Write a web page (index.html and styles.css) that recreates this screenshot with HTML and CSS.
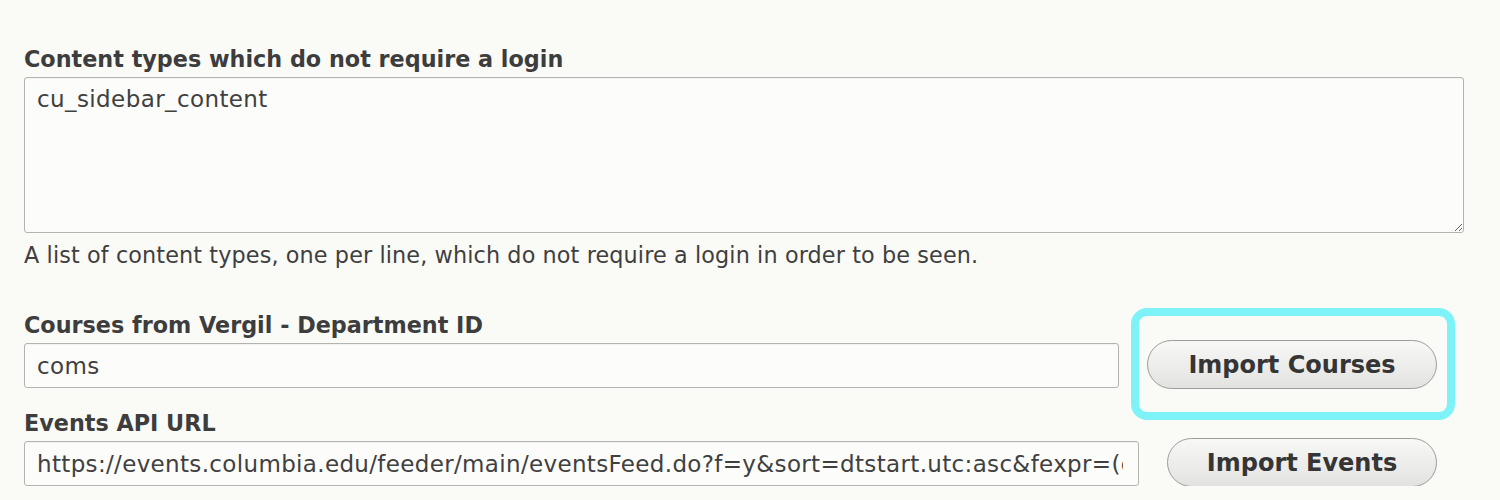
FILE: index.html
```html
<!DOCTYPE html>
<html lang="en">
<head>
<meta charset="utf-8">
<title>Settings</title>
<link rel="stylesheet" href="styles.css">
</head>
<body>
<form class="settings">
  <div class="field">
    <label class="field-label" for="ct">Content types which do not require a login</label>
    <textarea id="ct" class="textarea">cu_sidebar_content</textarea>
    <div class="description">A list of content types, one per line, which do not require a login in order to be seen.</div>
  </div>

  <div class="inline-row row-courses">
    <div class="inline-field">
      <label class="field-label" for="dept">Courses from Vergil - Department ID</label>
      <input id="dept" class="text-input" type="text" value="coms">
    </div>
    <div class="button-wrap">
      <button type="button" class="btn btn-courses">Import Courses</button>
      <span class="highlight"></span>
    </div>
  </div>

  <div class="inline-row row-events">
    <div class="inline-field">
      <label class="field-label" for="events">Events API URL</label>
      <input id="events" class="text-input url-input" type="text" value="https://events.columbia.edu/feeder/main/eventsFeed.do?f=y&amp;sort=dtstart.utc:asc&amp;fexpr=(categories.href=%22/public/.bedework/categories/org/ComputerScience%22)&amp;skinName=list-json&amp;count=20">
    </div>
    <div class="button-wrap">
      <button type="button" class="btn btn-events">Import Events</button>
    </div>
  </div>
</form>
</body>
</html>
```

FILE: styles.css
```css
html, body {
  margin: 0;
  padding: 0;
  background: #fafaf7;
}

body {
  font-family: "DejaVu Sans", "Liberation Sans", sans-serif;
  color: #3b3b3b;
}

.settings {
  padding: 46px 0 0 24px;
}

.field-label {
  display: block;
  font-weight: bold;
  font-size: 22.3px;
  line-height: 26px;
  color: #3d3d3d;
  margin-bottom: 5px;
  white-space: nowrap;
}

.textarea {
  display: block;
  box-sizing: border-box;
  width: 1440px;
  height: 156px;
  margin: 0;
  padding: 8px 12px;
  border: 1px solid #b3b3b1;
  border-radius: 3px;
  background: #fcfcfa;
  font-family: "DejaVu Sans", "Liberation Sans", sans-serif;
  font-size: 23px;
  line-height: 27px;
  letter-spacing: 0.4px;
  color: #404040;
  resize: vertical;
  outline: none;
  box-shadow: inset 0 1px 1px rgba(0,0,0,0.04);
}

.description {
  margin-top: 9px;
  font-size: 22.3px;
  line-height: 26px;
  letter-spacing: 0.12px;
  color: #3f3f3f;
}

.inline-row {
  display: flex;
  align-items: flex-end;
  gap: 28px;
  width: 1413px;
}

.row-courses {
  margin-top: 44px;
}

.row-events {
  margin-top: 22px;
}

.inline-field {
  flex: 1;
  min-width: 0;
}

.text-input {
  display: block;
  box-sizing: border-box;
  width: 100%;
  height: 45px;
  margin: 0;
  padding: 0 12px;
  border: 1px solid #b3b3b1;
  border-radius: 3px;
  background: #fcfcfa;
  font-family: "DejaVu Sans", "Liberation Sans", sans-serif;
  font-size: 23px;
  letter-spacing: 0.4px;
  color: #404040;
  outline: none;
  box-shadow: inset 0 1px 1px rgba(0,0,0,0.04);
}

.url-input {
  padding-right: 15px;
  letter-spacing: 0.34px;
}

.button-wrap {
  position: relative;
  display: flex;
}

.btn {
  box-sizing: border-box;
  height: 49px;
  margin: 0 0 -1px 0;
  padding: 0;
  border: 1px solid #9c9c9a;
  border-radius: 25px;
  background: linear-gradient(#f8f8f6, #ececea 55%, #e2e2e0);
  font-family: "DejaVu Sans", "Liberation Sans", sans-serif;
  font-weight: bold;
  font-size: 24px;
  color: #353535;
  cursor: pointer;
}

.btn-courses {
  width: 290px;
}

.btn-events {
  width: 270px;
}

.highlight {
  position: absolute;
  left: -16px;
  right: -18px;
  top: -32px;
  bottom: -32px;
  border: 8px solid #7df3f7;
  border-radius: 16px;
  pointer-events: none;
}
```
